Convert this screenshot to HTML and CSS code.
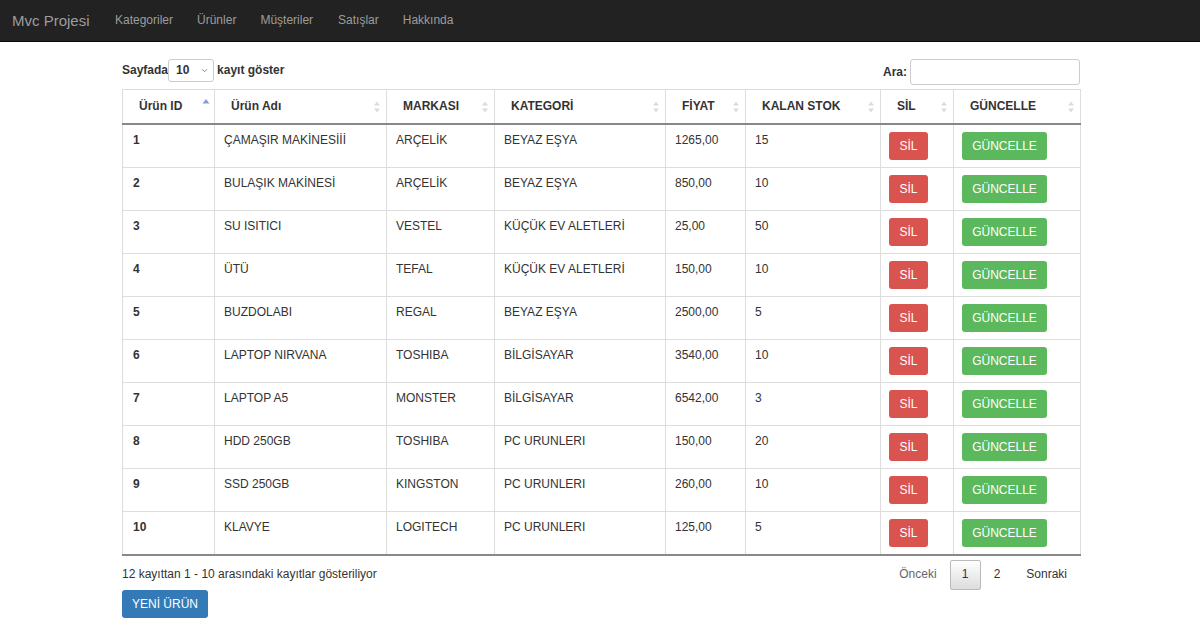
FILE: index.html
```html
<!DOCTYPE html>
<html lang="tr">
<head>
<meta charset="utf-8">
<title>Ürünler</title>
<link rel="stylesheet" href="styles.css">
</head>
<body>
<nav class="navbar">
  <a class="brand" href="#">Mvc Projesi</a>
  <ul class="nav">
    <li><a href="#">Kategoriler</a></li>
    <li><a href="#">Ürünler</a></li>
    <li><a href="#">Müşteriler</a></li>
    <li><a href="#">Satışlar</a></li>
    <li><a href="#">Hakkında</a></li>
  </ul>
</nav>
<main class="container">
  <div class="controls">
    <label class="length">Sayfada <span class="select">10<svg class="chev" width="7" height="5" viewBox="0 0 7 5"><path d="M1 1.2 L3.5 3.7 L6 1.2" fill="none" stroke="#777" stroke-width="0.9"/></svg></span> kayıt göster</label>
    <label class="filter">Ara: <span class="search"></span></label>
  </div>
  <table class="grid">
    <colgroup>
      <col style="width:92px"><col style="width:172px"><col style="width:108px"><col style="width:171px"><col style="width:80px"><col style="width:135px"><col style="width:73px"><col style="width:127px">
    </colgroup>
    <thead>
      <tr>
        <th class="first">Ürün ID<svg class="sort" width="8" height="14" viewBox="0 0 8 14"><path d="M4 2 L7.5 6.5 L0.5 6.5Z" fill="#7f9fd3"/></svg></th>
        <th>Ürün Adı<svg class="sort" width="8" height="14" viewBox="0 0 8 14"><path d="M4 1.5 L7 5.5 L1 5.5Z M4 12.5 L7 8.5 L1 8.5Z" fill="#dcdcdc"/></svg></th>
        <th>MARKASI<svg class="sort" width="8" height="14" viewBox="0 0 8 14"><path d="M4 1.5 L7 5.5 L1 5.5Z M4 12.5 L7 8.5 L1 8.5Z" fill="#dcdcdc"/></svg></th>
        <th>KATEGORİ<svg class="sort" width="8" height="14" viewBox="0 0 8 14"><path d="M4 1.5 L7 5.5 L1 5.5Z M4 12.5 L7 8.5 L1 8.5Z" fill="#dcdcdc"/></svg></th>
        <th>FİYAT<svg class="sort" width="8" height="14" viewBox="0 0 8 14"><path d="M4 1.5 L7 5.5 L1 5.5Z M4 12.5 L7 8.5 L1 8.5Z" fill="#dcdcdc"/></svg></th>
        <th>KALAN STOK<svg class="sort" width="8" height="14" viewBox="0 0 8 14"><path d="M4 1.5 L7 5.5 L1 5.5Z M4 12.5 L7 8.5 L1 8.5Z" fill="#dcdcdc"/></svg></th>
        <th>SİL<svg class="sort" width="8" height="14" viewBox="0 0 8 14"><path d="M4 1.5 L7 5.5 L1 5.5Z M4 12.5 L7 8.5 L1 8.5Z" fill="#dcdcdc"/></svg></th>
        <th>GÜNCELLE<svg class="sort" width="8" height="14" viewBox="0 0 8 14"><path d="M4 1.5 L7 5.5 L1 5.5Z M4 12.5 L7 8.5 L1 8.5Z" fill="#dcdcdc"/></svg></th>
      </tr>
    </thead>
    <tbody>
      <tr><td class="id">1</td><td>ÇAMAŞIR MAKİNESİİİ</td><td>ARÇELİK</td><td>BEYAZ EŞYA</td><td>1265,00</td><td>15</td><td><a class="btn btn-red" href="#">SİL</a></td><td><a class="btn btn-green" href="#">GÜNCELLE</a></td></tr>
      <tr><td class="id">2</td><td>BULAŞIK MAKİNESİ</td><td>ARÇELİK</td><td>BEYAZ EŞYA</td><td>850,00</td><td>10</td><td><a class="btn btn-red" href="#">SİL</a></td><td><a class="btn btn-green" href="#">GÜNCELLE</a></td></tr>
      <tr><td class="id">3</td><td>SU ISITICI</td><td>VESTEL</td><td>KÜÇÜK EV ALETLERİ</td><td>25,00</td><td>50</td><td><a class="btn btn-red" href="#">SİL</a></td><td><a class="btn btn-green" href="#">GÜNCELLE</a></td></tr>
      <tr><td class="id">4</td><td>ÜTÜ</td><td>TEFAL</td><td>KÜÇÜK EV ALETLERİ</td><td>150,00</td><td>10</td><td><a class="btn btn-red" href="#">SİL</a></td><td><a class="btn btn-green" href="#">GÜNCELLE</a></td></tr>
      <tr><td class="id">5</td><td>BUZDOLABI</td><td>REGAL</td><td>BEYAZ EŞYA</td><td>2500,00</td><td>5</td><td><a class="btn btn-red" href="#">SİL</a></td><td><a class="btn btn-green" href="#">GÜNCELLE</a></td></tr>
      <tr><td class="id">6</td><td>LAPTOP NIRVANA</td><td>TOSHIBA</td><td>BİLGİSAYAR</td><td>3540,00</td><td>10</td><td><a class="btn btn-red" href="#">SİL</a></td><td><a class="btn btn-green" href="#">GÜNCELLE</a></td></tr>
      <tr><td class="id">7</td><td>LAPTOP A5</td><td>MONSTER</td><td>BİLGİSAYAR</td><td>6542,00</td><td>3</td><td><a class="btn btn-red" href="#">SİL</a></td><td><a class="btn btn-green" href="#">GÜNCELLE</a></td></tr>
      <tr><td class="id">8</td><td>HDD 250GB</td><td>TOSHIBA</td><td>PC URUNLERI</td><td>150,00</td><td>20</td><td><a class="btn btn-red" href="#">SİL</a></td><td><a class="btn btn-green" href="#">GÜNCELLE</a></td></tr>
      <tr><td class="id">9</td><td>SSD 250GB</td><td>KINGSTON</td><td>PC URUNLERI</td><td>260,00</td><td>10</td><td><a class="btn btn-red" href="#">SİL</a></td><td><a class="btn btn-green" href="#">GÜNCELLE</a></td></tr>
      <tr><td class="id">10</td><td>KLAVYE</td><td>LOGITECH</td><td>PC URUNLERI</td><td>125,00</td><td>5</td><td><a class="btn btn-red" href="#">SİL</a></td><td><a class="btn btn-green" href="#">GÜNCELLE</a></td></tr>
    </tbody>
  </table>
  <div class="footer-row">
    <div class="info">12 kayıttan 1 - 10 arasındaki kayıtlar gösteriliyor</div>
    <ul class="pager">
      <li><a class="page-link muted" href="#">Önceki</a></li>
      <li><a class="page-link current" href="#">1</a></li>
      <li><a class="page-link" href="#">2</a></li>
      <li><a class="page-link" href="#">Sonraki</a></li>
    </ul>
  </div>
  <a class="btn btn-blue" href="#">YENİ ÜRÜN</a>
</main>
</body>
</html>
```
FILE: styles.css
```css
* { box-sizing: border-box; }
html, body { margin: 0; padding: 0; }
body {
  font-family: "Liberation Sans", Arial, sans-serif;
  font-size: 12px;
  line-height: 17px;
  color: #333;
  background: #fff;
}
a { text-decoration: none; }

.navbar {
  height: 42px;
  background: #222;
  border-bottom: 1px solid #080808;
  display: flex;
  align-items: center;
}
.brand {
  color: #9d9d9d;
  font-size: 15px;
  padding-left: 12px;
  width: 115px;
}
.nav {
  list-style: none;
  margin: 0;
  padding: 0;
  display: flex;
}
.nav li a {
  display: block;
  color: #9d9d9d;
  font-size: 12px;
  margin-right: 24px;
}
.nav li:nth-child(3) a { margin-right: 25px; }
.nav li:nth-child(4) a { margin-right: 24px; }

.container {
  width: 962px;
  padding-left: 3px;
  margin: 0 auto;
}

.controls {
  display: flex;
  justify-content: space-between;
  align-items: center;
  height: 46px;
  padding-top: 16px;
  margin-bottom: 1px;
}
.length, .filter {
  font-weight: bold;
  display: flex;
  align-items: center;
}
.length { margin-top: -5px; }
.select {
  display: inline-flex;
  align-items: center;
  justify-content: space-between;
  width: 46px;
  height: 23px;
  border: 1px solid #ccc;
  border-radius: 3px;
  margin: 0 3px 0 0;
  padding: 0 5px 0 7px;
  font-weight: bold;
}
.filter { margin-top: -2px; }
.search {
  display: inline-block;
  width: 170px;
  height: 26px;
  border: 1px solid #ccc;
  border-radius: 3px;
  margin-left: 3px;
  margin-right: 1px;
}

.grid {
  width: 958px;
  border-collapse: collapse;
  table-layout: fixed;
  border: 1px solid #ddd;
  border-bottom: 0;
}
.grid th {
  position: relative;
  text-align: left;
  font-weight: bold;
  height: 34px;
  padding: 0 16px;
  border: 1px solid #ddd;
  border-bottom: 2px solid #888;
  border-top: 1px solid #ddd;
  vertical-align: middle;
}
.grid th .sort {
  position: absolute;
  right: 5px;
  top: 10px;
}
.grid th.first .sort { right: 4px; top: 7px; }
.grid tbody tr { height: 43px; }
.grid tbody tr:first-child { height: 44px; }
.grid td {
  padding: 7px 9px 0 9px;
  border: 1px solid #ddd;
  vertical-align: top;
}
.grid tbody tr:last-child td { border-bottom: 2px solid #888; }
.grid td.id { font-weight: bold; padding-left: 10px; }
.grid td:nth-child(7), .grid td:nth-child(8) { padding-left: 8px; }

.btn {
  display: inline-flex;
  align-items: center;
  justify-content: center;
  height: 28px;
  padding: 0 10px;
  border-radius: 3px;
  color: #fff;
  font-size: 12px;
  line-height: 1;
  vertical-align: top;
}
.btn-red { background: #d9534f; width: 39px; }
.btn-green { background: #5cb85c; width: 85px; }
.btn-blue { background: #337ab7; width: 86px; }

.footer-row {
  display: flex;
  justify-content: space-between;
  align-items: center;
  height: 34px;
  padding-top: 4px;
}
.pager {
  list-style: none;
  margin: 0;
  padding: 0;
  display: flex;
  align-items: center;
  margin-right: 1px;
}
.page-link {
  display: flex;
  align-items: center;
  justify-content: center;
  color: #333;
  height: 30px;
  padding: 0 13px;
}
.page-link.muted { color: #666; margin-right: 0; }
.page-link.current {
  width: 31px;
  border: 1px solid #bbb;
  border-radius: 2px;
  background: linear-gradient(#fff, #dcdcdc);
  padding: 0;
}
```
